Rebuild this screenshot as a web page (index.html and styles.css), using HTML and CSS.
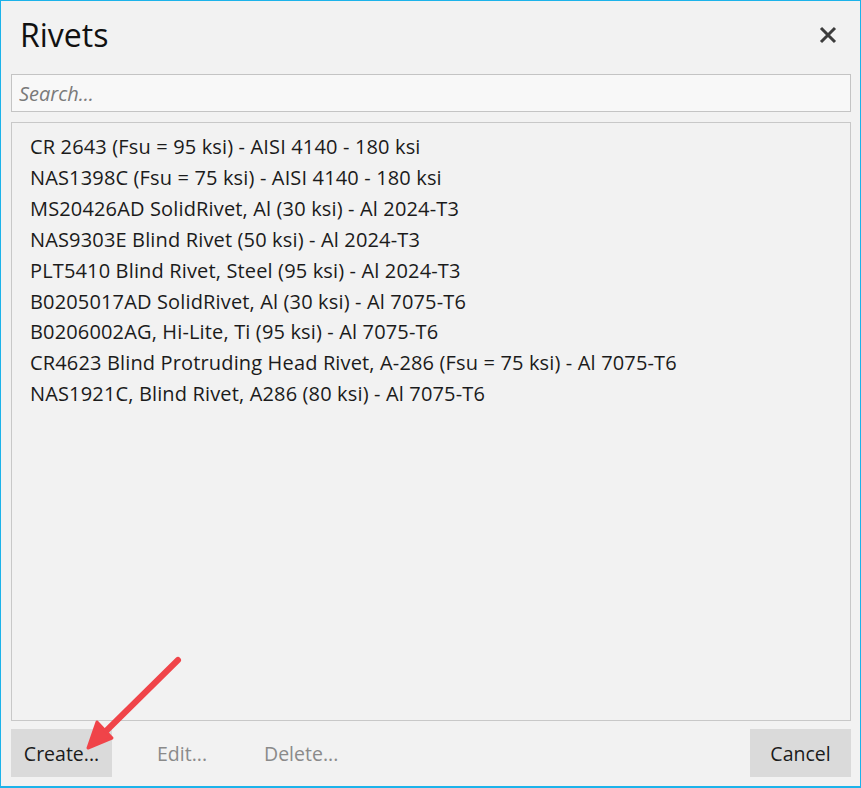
FILE: index.html
```html
<!DOCTYPE html>
<html>
<head>
<meta charset="utf-8">
<link rel="stylesheet" href="styles.css">
</head>
<body>
<div class="window">
  <div class="header">
    <h1 class="title">Rivets</h1>
    <button class="close" aria-label="Close">
      <svg width="18" height="18" viewBox="0 0 18 18"><path d="M2 2 L16 16 M16 2 L2 16" stroke="#3c3c3c" stroke-width="3" fill="none"/></svg>
    </button>
  </div>
  <div class="search">
    <input type="text" placeholder="Search...">
  </div>
  <ul class="list">
    <li>CR 2643 (Fsu = 95 ksi) - AISI 4140 - 180 ksi</li>
    <li>NAS1398C (Fsu = 75 ksi) - AISI 4140 - 180 ksi</li>
    <li>MS20426AD SolidRivet, Al (30 ksi) - Al 2024-T3</li>
    <li>NAS9303E Blind Rivet (50 ksi) - Al 2024-T3</li>
    <li>PLT5410 Blind Rivet, Steel (95 ksi) - Al 2024-T3</li>
    <li>B0205017AD SolidRivet, Al (30 ksi) - Al 7075-T6</li>
    <li>B0206002AG, Hi-Lite, Ti (95 ksi) - Al 7075-T6</li>
    <li>CR4623 Blind Protruding Head Rivet, A-286 (Fsu = 75 ksi) - Al 7075-T6</li>
    <li>NAS1921C, Blind Rivet, A286 (80 ksi) - Al 7075-T6</li>
  </ul>
  <div class="actions">
    <button class="btn btn-solid">Create...</button>
    <button class="btn btn-flat" disabled>Edit...</button>
    <button class="btn btn-flat" disabled>Delete...</button>
    <span class="spacer"></span>
    <button class="btn btn-solid">Cancel</button>
  </div>
  <svg class="arrow" width="861" height="788" viewBox="0 0 861 788">
    <line x1="178" y1="660" x2="100" y2="737" stroke="#f04449" stroke-width="6" stroke-linecap="round"/>
    <polygon points="88,748 97,722 112,738" fill="#f04449" stroke="#f04449" stroke-width="3" stroke-linejoin="round"/>
  </svg>
</div>
</body>
</html>
```
FILE: styles.css
```css
html, body {
  margin: 0;
  padding: 0;
  background: #f2f2f2;
}
body {
  font-family: "Open Sans", "Noto Sans", sans-serif;
  color: #1b1b1b;
}
.window {
  position: relative;
  box-sizing: border-box;
  width: 861px;
  height: 788px;
  border: 1px solid #1cb3ea;
  border-bottom-width: 2px;
  background: #f2f2f2;
  display: flex;
  flex-direction: column;
  padding: 0 9px 9px 10px;
}
.header {
  height: 72px;
  display: flex;
  align-items: center;
  justify-content: space-between;
}
.title {
  margin: -5px 0 0 9px;
  font-weight: 400;
  font-size: 32px;
  color: #111;
  line-height: 40px;
}
.close {
  border: none;
  background: transparent;
  padding: 0;
  margin-right: 14px;
  margin-top: -5px;
  width: 18px;
  height: 18px;
  display: flex;
}
.search {
  margin-top: 1px;
}
.search input {
  box-sizing: border-box;
  width: 100%;
  height: 38px;
  border: 1px solid #c4c4c4;
  background: #f8f8f8;
  font-family: inherit;
  font-size: 20px;
  padding: 0 7px;
  outline: none;
}
.search input::placeholder {
  color: #7a7a7a;
  font-style: italic;
}
.list {
  list-style: none;
  margin: 10px 0 0 0;
  padding: 9px 0 0 18px;
  border: 1px solid #c8c8c8;
  flex: 1;
}
.list li {
  font-size: 20px;
  letter-spacing: 0.15px;
  line-height: 30.9px;
  white-space: nowrap;
}
.actions {
  display: flex;
  align-items: stretch;
  margin-top: 8px;
  height: 48px;
}
.btn {
  font-family: inherit;
  font-size: 19.5px;
  border: none;
  padding: 0;
  background: transparent;
  color: #1b1b1b;
}
.btn-solid {
  width: 101px;
  background: #dadada;
}
.btn-flat {
  color: #8a8a8a;
  margin-left: 45px;
  padding: 0;
}
.btn-flat + .btn-flat {
  margin-left: 57px;
}
.spacer {
  flex: 1;
}
.arrow {
  position: absolute;
  left: -1px;
  top: -1px;
  pointer-events: none;
}
```
